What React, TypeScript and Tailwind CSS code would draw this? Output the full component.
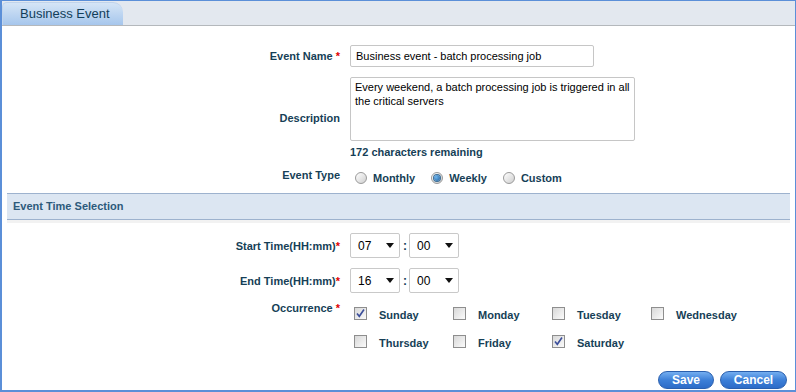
import React from "react";

const labelCls = "w-[338px] shrink-0 text-right text-[11px] leading-[14px] font-bold text-[#163f57]";

function Req() {
  return <span className="text-[#e00000]">*</span>;
}

function Radio({ checked }: { checked?: boolean }) {
  return (
    <span className="w-[12px] h-[12px] rounded-full border border-[#9a9a9a] bg-gradient-to-br from-[#ffffff] to-[#cfcfcf] flex items-center justify-center shrink-0">
      {checked && (
        <span className="w-[6px] h-[6px] rounded-full bg-[radial-gradient(circle_at_35%_35%,#6fb6ee,#1f5f9c)] ring-1 ring-[#3b6d95]" />
      )}
    </span>
  );
}

function Check({ checked }: { checked?: boolean }) {
  return (
    <span className="w-[13px] h-[13px] border border-[#8e8e8e] bg-gradient-to-br from-[#d8d8d8] to-[#fbfbfb] shrink-0 flex items-center justify-center">
      {checked && (
        <svg width="11" height="11" viewBox="0 0 11 11">
          <path d="M2 5.5 L4.3 8.3 L9 1.5" fill="none" stroke="#3c4f9b" strokeWidth="1.6" />
        </svg>
      )}
    </span>
  );
}

function Select({ value }: { value: string }) {
  return (
    <div className="w-[50px] h-[25px] border border-[#c9c9c9] rounded-[2px] bg-white flex items-center justify-between pl-[7px] pr-[5px] text-[12px] text-black">
      <span>{value}</span>
      <svg width="8" height="5" viewBox="0 0 8 5">
        <path d="M0 0 H8 L4 5 Z" fill="#111" />
      </svg>
    </div>
  );
}

function Day({ name, checked }: { name: string; checked?: boolean }) {
  return (
    <div className="w-[99px] flex items-start pl-[4px]">
      <Check checked={checked} />
      <span className="ml-[12px] mt-[1px] text-[11px] leading-[14px] font-bold text-[#163f57]">{name}</span>
    </div>
  );
}

export default function App() {
  const days: [string, boolean][] = [
    ["Sunday", true],
    ["Monday", false],
    ["Tuesday", false],
    ["Wednesday", false],
    ["Thursday", false],
    ["Friday", false],
    ["Saturday", true],
  ];

  return (
    <div className="w-[796px] h-[392px] bg-white border-[#5b8fd8] border-t border-r border-l-2 border-b-2 flex flex-col font-['Liberation_Sans',Arial,sans-serif]">
      {/* tab header */}
      <div className="h-[25px] shrink-0 bg-[#e3e8ef] border-b border-[#b4b8bc] flex items-end">
        <div className="w-[121px] h-[23px] rounded-tl-[5px] rounded-tr-[10px] bg-gradient-to-b from-[#d5e5f6] to-[#a6c6ec] border-t border-l border-[#c0d4ec] text-[13px] text-[#123e5a] pl-[17px] flex items-center">
          Business Event
        </div>
      </div>

      {/* Event Name */}
      <div className="flex items-center mt-[19px]">
        <div className={labelCls}>
          Event Name <Req />
        </div>
        <input
          defaultValue="Business event - batch processing job"
          className="ml-[10px] w-[244px] h-[22px] border border-[#c6c6c6] rounded-[2px] px-[5px] text-[11px] text-black outline-none"
        />
      </div>

      {/* Description */}
      <div className="flex items-center mt-[10px]">
        <div className={labelCls}>Description</div>
        <div className="ml-[10px] flex flex-col">
          <textarea
            defaultValue="Every weekend, a batch processing job is triggered in all the critical servers"
            className="w-[285px] h-[64px] border border-[#c6c6c6] rounded-[2px] pl-[4px] pr-[2px] py-[2px] text-[11px] leading-[14px] text-black resize-none overflow-hidden outline-none"
          />
          <div className="mt-[4px] text-[11px] leading-[14px] font-bold text-[#163f57]">172 characters remaining</div>
        </div>
      </div>

      {/* Event Type */}
      <div className="flex items-start mt-[9px]">
        <div className={labelCls}>Event Type</div>
        <div className="ml-[15px] pt-[3px] flex items-center text-[11px] leading-[14px] font-bold text-[#163f57]">
          <Radio />
          <span className="ml-[6px] mr-[16px]">Monthly</span>
          <Radio checked />
          <span className="ml-[6px] mr-[16px]">Weekly</span>
          <Radio />
          <span className="ml-[6px]">Custom</span>
        </div>
      </div>

      {/* section header */}
      <div className="mt-[8px] mx-[5px] h-[27px] shrink-0 bg-[#dce6f2] border-t border-b border-[#9db2ce] flex items-center pl-[6px] text-[11px] font-bold text-[#2d5a7b]">
        Event Time Selection
      </div>
      <div className="mx-[5px] h-[3px] bg-[#f2f2f2]" />

      {/* Start Time */}
      <div className="flex items-center mt-[10px]">
        <div className={labelCls}>
          Start Time(HH:mm)<Req />
        </div>
        <div className="ml-[10px] flex items-center">
          <Select value="07" />
          <span className="ml-[3px] mr-[2px] text-[12px] font-bold text-[#163f57]">:</span>
          <Select value="00" />
        </div>
      </div>

      {/* End Time */}
      <div className="flex items-center mt-[10px]">
        <div className={labelCls}>
          End Time(HH:mm)<Req />
        </div>
        <div className="ml-[10px] flex items-center">
          <Select value="16" />
          <span className="ml-[3px] mr-[2px] text-[12px] font-bold text-[#163f57]">:</span>
          <Select value="00" />
        </div>
      </div>

      {/* Occurrence */}
      <div className="flex items-start mt-[8px]">
        <div className={labelCls}>
          Occurrence <Req />
        </div>
        <div className="ml-[10px] pt-[6px] grid grid-cols-[repeat(4,99px)] gap-y-[13px]">
          {days.map(([n, c]) => (
            <Day key={n} name={n} checked={c} />
          ))}
        </div>
      </div>

      {/* buttons */}
      <div className="flex-1 flex items-end justify-end gap-[6px] pr-[8px] pb-[1px]">
        <button className="w-[56px] h-[18px] rounded-full border border-[#2a5fae] bg-gradient-to-b from-[#74aef0] via-[#3d80d8] to-[#2d6cc8] text-white text-[12px] font-bold leading-none">
          Save
        </button>
        <button className="w-[67px] h-[18px] rounded-full border border-[#2a5fae] bg-gradient-to-b from-[#74aef0] via-[#3d80d8] to-[#2d6cc8] text-white text-[12px] font-bold leading-none">
          Cancel
        </button>
      </div>
    </div>
  );
}
